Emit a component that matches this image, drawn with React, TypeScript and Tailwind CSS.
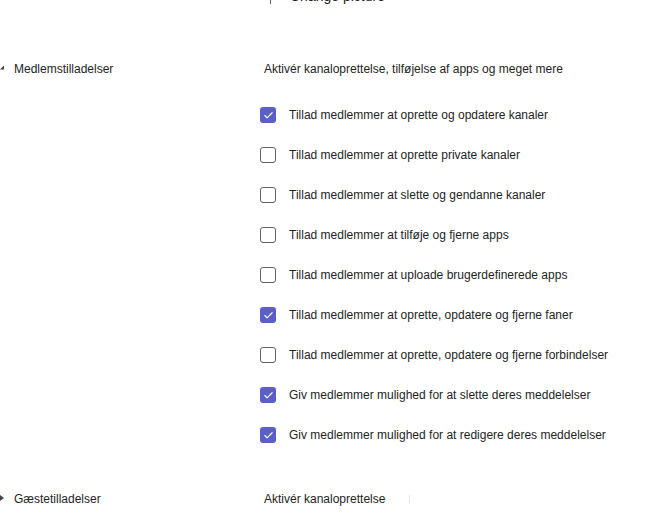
import { Check } from "lucide-react";

const perms = [
  { label: "Tillad medlemmer at oprette og opdatere kanaler", on: true },
  { label: "Tillad medlemmer at oprette private kanaler", on: false },
  { label: "Tillad medlemmer at slette og gendanne kanaler", on: false },
  { label: "Tillad medlemmer at tilføje og fjerne apps", on: false },
  { label: "Tillad medlemmer at uploade brugerdefinerede apps", on: false },
  { label: "Tillad medlemmer at oprette, opdatere og fjerne faner", on: true },
  { label: "Tillad medlemmer at oprette, opdatere og fjerne forbindelser", on: false },
  { label: "Giv medlemmer mulighed for at slette deres meddelelser", on: true },
  { label: "Giv medlemmer mulighed for at redigere deres meddelelser", on: true },
];

function Box({ on }: { on: boolean }) {
  return on ? (
    <span className="flex h-4 w-4 items-center justify-center rounded-[3px] bg-[#5b5fc7]">
      <Check className="h-[11px] w-[11px] text-white" strokeWidth={2.5} />
    </span>
  ) : (
    <span className="h-4 w-4 rounded-[3px] border border-[#616161] bg-white" />
  );
}

export default function App() {
  return (
    <div className="h-[521px] w-[671px] overflow-hidden bg-white font-['Liberation_Sans',Arial,sans-serif] text-[12px] text-[#242424]">
      <div className="relative h-[5px]">
        <div className="absolute left-[270px] top-0 h-[4px] w-px bg-[#616161]" />
        <span className="absolute left-[290px] top-[-12px] text-[14px] leading-[16px] text-[#242424]">
          Change picture
        </span>
      </div>

      <div className="mt-[55px] flex">
        <div className="flex h-[18px] w-[264px] items-center gap-[10px]">
          <svg width="4" height="5" viewBox="0 0 4 5" className="-mt-[3px]">
            <path d="M0 4.5 L4 0.5 L4 4.5 Z" fill="#424242" />
          </svg>
          <span>Medlemstilladelser</span>
        </div>
        <div>
          <div className="flex h-[18px] items-center">
            Aktivér kanaloprettelse, tilføjelse af apps og meget mere
          </div>
          <div className="mt-[29px] flex flex-col gap-[24px]">
            {perms.map((p) => (
              <div key={p.label} className="-ml-[4px] flex h-4 items-center gap-[13px]">
                <Box on={p.on} />
                <span>{p.label}</span>
              </div>
            ))}
          </div>
        </div>
      </div>

      <div className="mt-[47px] flex">
        <div className="flex h-[18px] w-[264px] items-center gap-[10px]">
          <svg width="4" height="6" viewBox="0 0 4 6" className="-mt-[2px]">
            <path d="M0 0 L4 3 L0 6 Z" fill="#424242" />
          </svg>
          <span>Gæstetilladelser</span>
        </div>
        <div className="flex h-[18px] items-center gap-[24px]">
          <span>Aktivér kanaloprettelse</span>
          <span className="h-[8px] w-px bg-[#dbeafe]" />
        </div>
      </div>
    </div>
  );
}
